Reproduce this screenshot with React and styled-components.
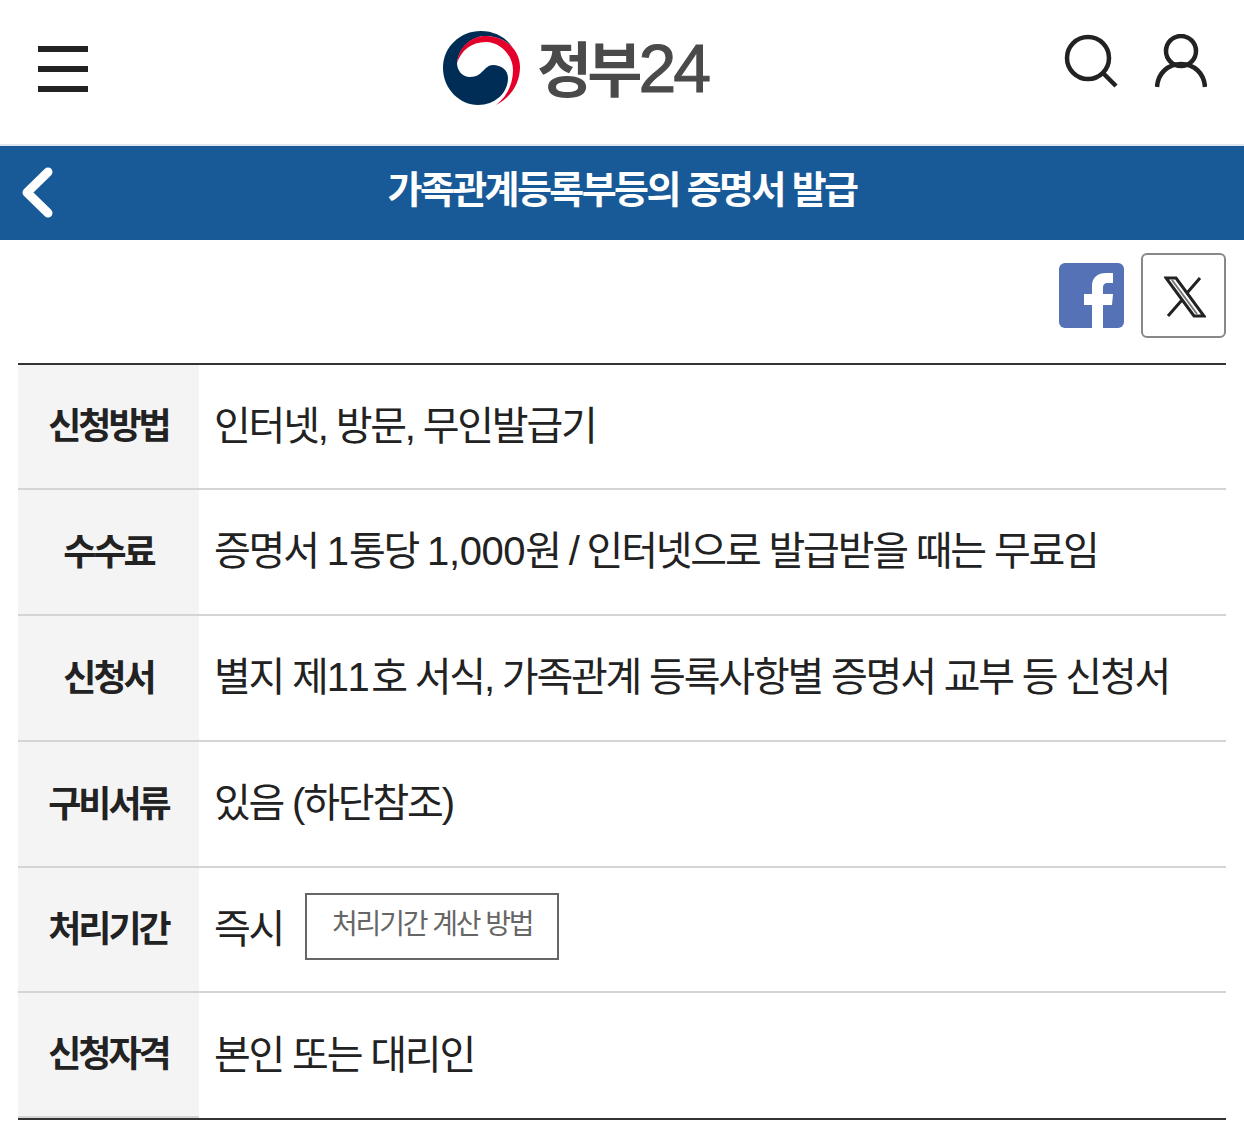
import styled, { createGlobalStyle } from "styled-components";

const GlobalStyle = createGlobalStyle`
    html, body {
        margin: 0;
        padding: 0;
        background: #fff;
        font-family: "Liberation Sans", "Noto Sans CJK KR", sans-serif;
    }
`
const Page = styled.div`
    width: 1244px;
    height: 1136px;
    overflow: hidden;
`
const Header = styled.header`
    height: 144px;
    padding: 0 37px 0 38px;
    display: grid;
    grid-template-columns: 405px auto 1fr;
    align-items: center;
`
const MenuButton = styled.div`
    width: 50px;
    height: 46px;
    margin-top: -6px;
    display: flex;
    flex-direction: column;
    justify-content: space-between;
    span {
        display: block;
        height: 6px;
        background: #222;
    }
`
const Logo = styled.div`
    display: flex;
    align-items: center;
    gap: 16px;
    margin-top: -8px;
`
const LogoText = styled.span`
    font-size: 60px;
    font-weight: 700;
    letter-spacing: -5px;
    color: #4a4a4a;
    line-height: 1;
    font-family: "Noto Sans CJK KR", sans-serif;
`
const LogoDigits = styled.span`
    font-family: "Liberation Sans", sans-serif;
    font-size: 68px;
    font-weight: 400;
    letter-spacing: -3px;
    margin-left: 1px;
    -webkit-text-stroke: 1px #4a4a4a;
`
const HeaderIcons = styled.div`
    display: flex;
    justify-content: flex-end;
    gap: 36px;
    margin-top: -22px;
`
const TitleBar = styled.div`
    height: 94px;
    border-top: 2px solid #e1e6f0;
    background: #185a97;
    display: flex;
    align-items: center;
    justify-content: center;
    position: relative;
`
const BackIcon = styled.svg`
    position: absolute;
    left: 14px;
    top: 18px;
`
const Title = styled.h1`
    margin: 0 0 14px;
    font-size: 38px;
    font-weight: 700;
    letter-spacing: -2.6px;
    color: #fff;
`
const ShareRow = styled.div`
    height: 123px;
    padding: 13px 18px 0 0;
    box-sizing: border-box;
    display: flex;
    justify-content: flex-end;
    gap: 17px;
`
const Facebook = styled.svg`
    margin-top: 10px;
`
const XButton = styled.div`
    width: 85px;
    height: 85px;
    box-sizing: border-box;
    padding: 3px 0 0 2px;
    border: 2px solid #888;
    border-radius: 6px;
    display: flex;
    align-items: center;
    justify-content: center;
`
const InfoTable = styled.dl`
    margin: 0 18px;
    border-top: 2px solid #333;
    border-bottom: 2px solid #333;
`
const Row = styled.div`
    display: grid;
    grid-template-columns: 181px 1fr;
    height: ${({ $height }) => $height}px;
    &:last-child dd {
        border-bottom: none;
    }
`
const Label = styled.dt`
    background: #f4f4f4;
    border-bottom: 2px solid #d4d4d4;
    padding-bottom: 7px;
    display: flex;
    align-items: center;
    justify-content: center;
    font-size: 36px;
    font-weight: 700;
    letter-spacing: -3px;
    color: #222;
`
const Value = styled.dd`
    margin: 0;
    padding: 0 0 8px 15px;
    border-bottom: 2px solid #d4d4d4;
    display: flex;
    align-items: center;
    gap: 22px;
    font-size: 40px;
    font-weight: 400;
    letter-spacing: -2.2px;
    color: #222;
    white-space: pre;
`
// 숫자는 한글보다 자간이 넓다
const Digits = styled.span`
    letter-spacing: ${({ $spacing }) => $spacing}px;
`
const SmallButton = styled.span`
    width: 254px;
    height: 67px;
    margin-top: 2px;
    box-sizing: border-box;
    padding-bottom: 9px;
    border: 2px solid #666;
    display: flex;
    align-items: center;
    justify-content: center;
    font-size: 28px;
    letter-spacing: -2.1px;
    color: #666;
`

const rows = [
    { label: "신청방법", value: "인터넷, 방문, 무인발급기", height: 125 },
    { label: "수수료", value: <span>증명서 <Digits $spacing={0}>1</Digits>통당 <Digits $spacing={-0.4}>1,000</Digits>원 / 인터넷으로 발급받을 때는 무료임</span>, height: 126 },
    { label: "신청서", value: <span>별지 제<Digits $spacing={1.5}>11</Digits>호 서식, 가족관계 등록사항별 증명서 교부 등 신청서</span>, height: 126 },
    { label: "구비서류", value: "있음 (하단참조)", height: 126 },
    { label: "처리기간", value: "즉시", button: "처리기간 계산 방법", height: 125 },
    { label: "신청자격", value: "본인 또는 대리인", height: 125 },
]

const App = () => {
    return (
        <Page>
            <GlobalStyle />
            <Header>
                <MenuButton><span /><span /><span /></MenuButton>
                <Logo>
                    <svg width="78" height="74" viewBox="0 0 78 74">
                        <path d="M38 0C17 0 0 16 0 37s17 37 35 37c17 0 30-12 30-27 0-8-7-13-15-13-9 0-10 12-23 12-8 0-13-7-13-14C16 16 29 5 43 5c11 0 21 5 27 12C63 6 51 0 38 0Z" fill="#002d56" />
                        <path d="M14 32C16 15 29 5 43 5c19 0 34 14 34 31 0 17-10 31-24 38 11-8 17-21 17-35C70 24 57 11 43 11 28 11 18 20 14 32Z" fill="#e4002b" />
                    </svg>
                    <LogoText>정부<LogoDigits>24</LogoDigits></LogoText>
                </Logo>
                <HeaderIcons>
                    <svg width="55" height="55" viewBox="0 0 55 55" fill="none" stroke="#222" strokeWidth="4.5">
                        <circle cx="24" cy="24" r="21" />
                        <path d="M39 39 L52 52" />
                    </svg>
                    <svg width="52" height="55" viewBox="0 0 52 55" fill="none" stroke="#222" strokeWidth="4.5">
                        <circle cx="26" cy="17" r="15" />
                        <path d="M2 53C3 39 13 30 26 30s23 9 24 23" />
                    </svg>
                </HeaderIcons>
            </Header>
            <TitleBar>
                <BackIcon width="40" height="58" viewBox="0 0 40 58" fill="none" stroke="#fff" strokeWidth="9" strokeLinecap="round" strokeLinejoin="round">
                    <path d="M34 8 L13 28.5 L34 49" />
                </BackIcon>
                <Title>가족관계등록부등의 증명서 발급</Title>
            </TitleBar>
            <ShareRow>
                <Facebook width="65" height="65" viewBox="0 0 65 65">
                    <rect width="65" height="65" rx="6" fill="#5472b5" />
                    <path d="M33 65V42H25V31H33V23C33 14 39 10 47 10H54V20H49C45 20 44 22 44 25V31H54L53 42H44V65Z" fill="#fff" />
                </Facebook>
                <XButton>
                    <svg width="42" height="42" viewBox="0 0 42 42" fill="none" stroke="#222">
                        <path d="M2 2h10l28 38H30Z" strokeWidth="3" />
                        <path d="M36 2 L23 17 M18 24 L4 40" strokeWidth="3" />
                        <path d="M8 4 L33 38" strokeWidth="2" stroke="#777" />
                    </svg>
                </XButton>
            </ShareRow>
            <InfoTable>
                {rows.map((row) => (
                    <Row key={row.label} $height={row.height}>
                        <Label>{row.label}</Label>
                        <Value>
                            {row.value}
                            {row.button && <SmallButton>{row.button}</SmallButton>}
                        </Value>
                    </Row>
                ))}
            </InfoTable>
        </Page>
    )
}

export default App;
